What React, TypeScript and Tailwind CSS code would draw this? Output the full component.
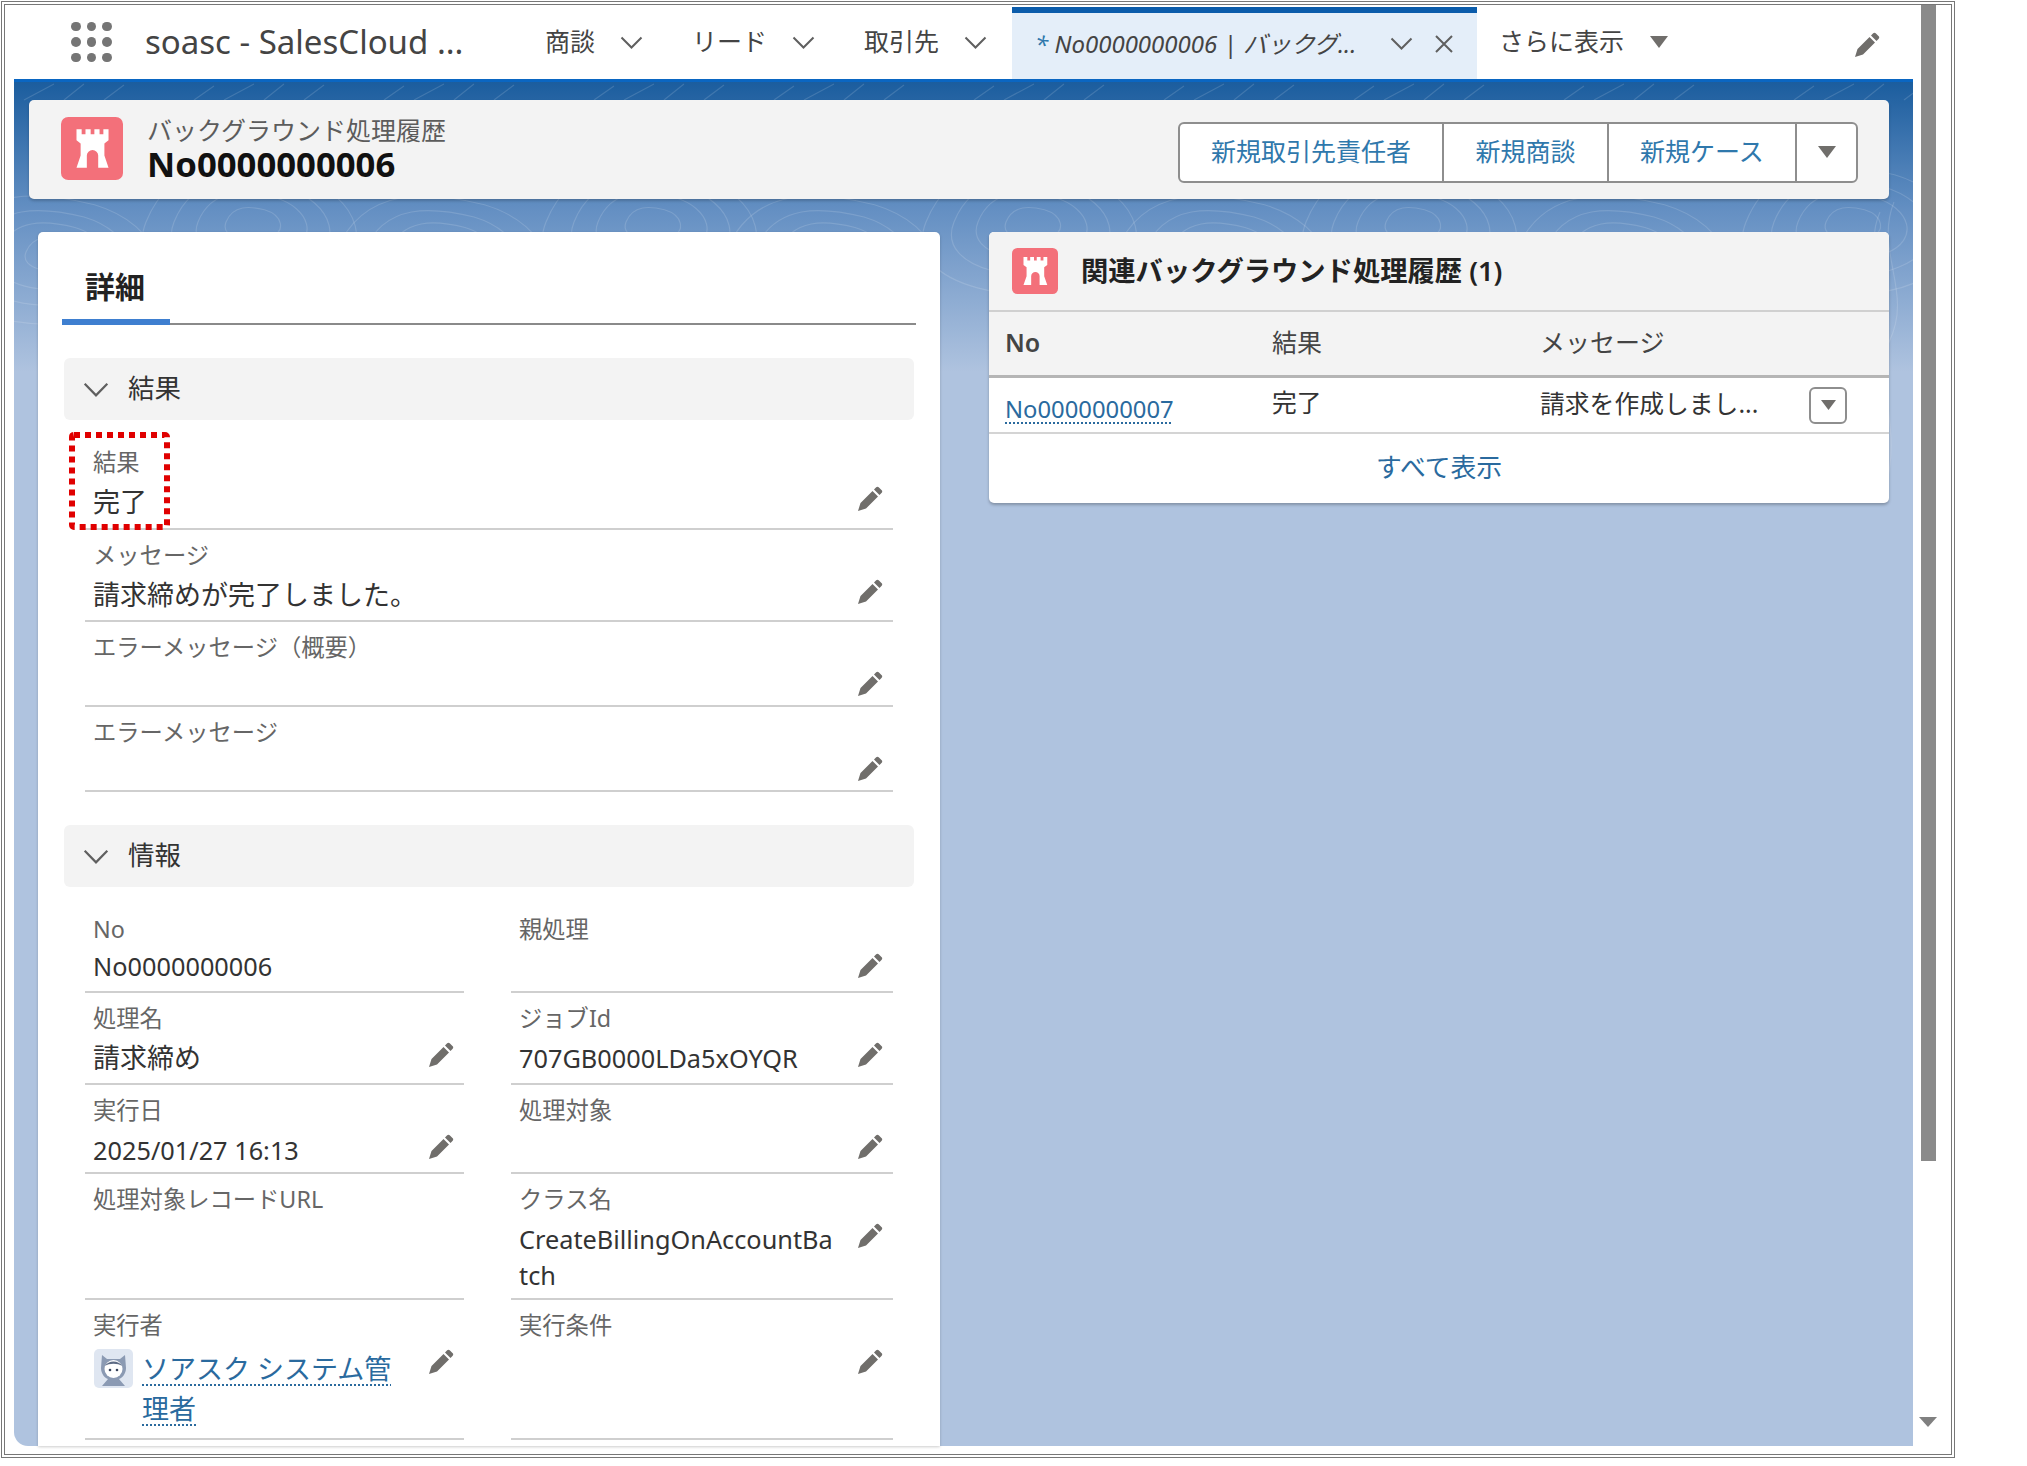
import type { ReactNode } from "react";

const Chevron = ({ w = 23, h = 13 }: { w?: number; h?: number }) => (
  <svg width={w} height={h} viewBox="0 0 23 13" preserveAspectRatio="none" className="shrink-0">
    <path d="M1.5 1.5L11.5 11.5L21.5 1.5" fill="none" stroke="#5f5f5f" strokeWidth="2" />
  </svg>
);

const Caret = () => (
  <svg width="20" height="12" viewBox="0 0 20 12" className="shrink-0">
    <path d="M1 0H19L10 12Z" fill="#706e6b" />
  </svg>
);

const Pencil = () => (
  <svg width="26" height="26" viewBox="0 0 26 26" className="shrink-0">
    <path d="M1 25L3.5 17L15.5 5L21 10.5L9 22.5Z M17 3.5L19.2 1.3C20 .6 21 .6 21.7 1.3L24.7 4.3C25.4 5 25.4 6 24.7 6.8L22.5 9Z" fill="#706e6b" />
  </svg>
);

const CastleIcon = ({ w, h }: { w: number; h: number }) => (
  <svg width={w} height={h} viewBox="0 0 60 62" preserveAspectRatio="none" className="shrink-0">
    <rect width="60" height="62" rx="7" fill="#f3707a" />
    <path
      d="M15 12h5v5h3.7v-5h5v5h3.6v-5h5v5h3.7v-5h5v11l-4 3v12l4 12H36V38a5.5 5.5 0 0 0-11 0v12H15l4-12V26l-4-3z"
      fill="#fff"
    />
  </svg>
);

const Avatar = () => (
  <svg width="39" height="39" viewBox="0 0 39 39" className="shrink-0">
    <rect width="39" height="39" rx="5" fill="#dfe6f1" />
    <path d="M8 6L13 10H26L31 6L32 19C32 25 28 29 25 30L31 37H8L14 30C11 29 7 25 7 19Z" fill="#8b9ab3" />
    <circle cx="19.5" cy="20" r="9" fill="#fff" />
    <path d="M11 17C14 11 25 11 28 17C24 14 15 14 11 17Z" fill="#5d6b85" />
    <circle cx="16" cy="21" r="1.3" fill="#36425a" />
    <circle cx="23" cy="21" r="1.3" fill="#36425a" />
  </svg>
);

const Contours = () => (
  <svg className="pointer-events-none absolute inset-x-0 top-0" width="1899" height="420" viewBox="0 0 1899 420">
    <g fill="none" stroke="#fff" strokeOpacity="0.14" strokeWidth="1.2">
      {[40, 240, 430, 640, 820, 1020, 1210, 1400, 1610, 1840].map((x, i) => {
        const y = i % 2 ? 140 : 170;
        return (
          <g key={x}>
            {[0.35, 0.7, 1, 1.35].map((s) => (
              <path
                key={s}
                d={`M${x - 80 * s} ${y}C${x - 60 * s} ${y - 50 * s} ${x - 10 * s} ${y - 45 * s} ${x + 30 * s} ${y - 35 * s}C${x + 80 * s} ${y - 20 * s} ${x + 95 * s} ${y + 25 * s} ${x + 45 * s} ${y + 45 * s}C${x} ${y + 65 * s} ${x - 100 * s} ${y + 50 * s} ${x - 80 * s} ${y}Z`}
              />
            ))}
            <path d={`M${x - 40} 4L${x - 60} 18M${x} 2L${x - 30} 18M${x + 30} 2L${x + 10} 18M${x + 70} 3L${x + 50} 18`} />
          </g>
        );
      })}
      <path d="M1880 120C1860 170 1900 210 1875 260C1860 300 1890 350 1870 410" />
      <path d="M1866 130C1846 175 1886 215 1862 262C1848 300 1876 350 1856 410" />
    </g>
  </svg>
);

const NavItem = ({ label, className }: { label: string; className: string }) => (
  <div className={`flex h-full items-center gap-[25px] ${className}`}>
    <span className="text-[25px] text-[#444]">{label}</span>
    <Chevron />
  </div>
);

const Field = ({
  label,
  h,
  children,
  edit = true,
  valueClass = "pt-[8px]",
}: {
  label: string;
  h: string;
  children?: ReactNode;
  edit?: boolean;
  valueClass?: string;
}) => (
  <div className={`flex flex-col border-b-2 border-[#cfcfcf] pl-[8px] pr-[10px] pt-[11px] ${h}`}>
    <div className="h-[28px] text-[23.3px] leading-[28px] text-[#666]">{label}</div>
    <div className="flex justify-between">
      <div className={`text-[25.3px] leading-[36px] text-[#333] ${valueClass}`}>{children}</div>
      {edit && (
        <div className="pt-[10px]">
          <Pencil />
        </div>
      )}
    </div>
  </div>
);

const SectionHeader = ({ label, className }: { label: string; className: string }) => (
  <div className={`flex h-[62px] items-center gap-[19px] rounded-[6px] bg-[#f3f3f3] pl-[19px] ${className}`}>
    <Chevron w={26} h={15} />
    <span className="text-[26.5px] text-[#333]">{label}</span>
  </div>
);

export default function App() {
  return (
    <div className="h-[1466px] w-[2027px] overflow-hidden bg-white pl-px pt-px font-['Noto_Sans','Noto_Sans_CJK_JP',sans-serif]">
      <div className="flex h-[1457px] w-[1954px] border-[4px] border-double border-[#777] pb-[8px] pl-[9px]">
        <div className="flex w-[1899px] shrink-0 flex-col">
          {/* nav bar */}
          <div className="flex h-[74px] shrink-0 items-center pl-[57px]">
            <div className="grid w-[41px] shrink-0 grid-cols-3 gap-x-[6px] gap-y-[6px]">
              {Array.from({ length: 9 }).map((_, i) => (
                <span key={i} className="h-[9.5px] w-[9.5px] rounded-full bg-[#757575]" />
              ))}
            </div>
            <div className="ml-[33px] w-[400px] shrink-0 text-[33px] text-[#444]">soasc - SalesCloud ...</div>
            <NavItem label="商談" className="w-[147px] shrink-0" />
            <NavItem label="リード" className="w-[172px] shrink-0" />
            <NavItem label="取引先" className="w-[148px] shrink-0" />
            <div className="mt-[2px] flex h-[72px] w-[465px] shrink-0 items-center border-t-[6px] border-[#0b5cab] bg-[#e4eef9] pb-[5px] pl-[23px]">
              <span className="w-[355px] shrink-0 whitespace-nowrap text-[24px] italic text-[#444]">
                <span className="text-[#2f78ac]">*</span> No0000000006 | バックグ...
              </span>
              <Chevron />
              <svg width="20" height="18" viewBox="0 0 20 18" className="ml-[21px] shrink-0">
                <path d="M2 1L18 17M18 1L2 17" fill="none" stroke="#5f5f5f" strokeWidth="2" />
              </svg>
            </div>
            <div className="ml-[22px] flex shrink-0 items-center gap-[25px]">
              <span className="text-[25px] text-[#444]">さらに表示</span>
              <Caret />
            </div>
            <div className="ml-auto mr-[33px] mt-[5px]">
              <Pencil />
            </div>
          </div>

          {/* page body */}
          <div className="relative flex min-h-0 flex-1 flex-col rounded-bl-[14px] border-t-[3px] border-[#0a66c2] bg-[linear-gradient(#1b5d9e_0px,#6590c3_130px,#afc3df_290px)] pl-[15px] pr-[24px] pt-[18px]">
            <Contours />

            {/* highlights */}
            <div className="relative flex h-[99px] shrink-0 items-center rounded-[5px] bg-[#f3f3f3] pl-[32px] pr-[31px] shadow-[0_2px_3px_rgba(0,0,0,0.2)]">
              <div className="mb-[3px]">
                <CastleIcon w={62} h={63} />
              </div>
              <div className="mb-[5px] ml-[24px] flex flex-col">
                <span className="text-[25px] leading-[33px] text-[#5c5c5c]">バックグラウンド処理履歴</span>
                <span className="text-[34.7px] font-bold leading-[33px] text-[#111]">No0000000006</span>
              </div>
              <div className="ml-auto mt-[5px] flex h-[61px] items-stretch rounded-[6px] border-2 border-[#8e8e8e] bg-white text-[25px] text-[#2f78ac]">
                <div className="flex w-[262px] items-center justify-center">新規取引先責任者</div>
                <div className="flex w-[165px] items-center justify-center border-l-2 border-[#8e8e8e]">新規商談</div>
                <div className="flex w-[188px] items-center justify-center border-l-2 border-[#8e8e8e]">新規ケース</div>
                <div className="flex w-[61px] items-center justify-center border-l-2 border-[#8e8e8e]">
                  <Caret />
                </div>
              </div>
            </div>

            <div className="relative mt-[33px] flex min-h-0 flex-1 items-start gap-[49px] pl-[9px]">
              {/* detail card */}
              <div className="h-full w-[902px] shrink-0 overflow-hidden rounded-t-[5px] bg-white shadow-[0_1px_3px_rgba(0,0,0,0.2)]">
                <div className="mx-[24px] flex h-[93px] items-end border-b-2 border-[#8a8a8a]">
                  <div className="-mb-[2px] flex h-[68px] w-[108px] items-center justify-center border-b-[6px] border-[#3e7fd0] pb-[4px] pr-[2px] text-[30px] font-bold text-[#222]">
                    詳細
                  </div>
                </div>

                <div className="px-[26px] pt-[33px]">
                  <SectionHeader label="結果" className="" />
                  <div className="mx-[21px] mt-[17px] flex flex-col">
                    <div className="relative">
                      <Field label="結果" h="h-[93px]">
                        <span className="text-[27px]">完了</span>
                      </Field>
                      <svg width="101" height="98" viewBox="0 0 101 98" className="absolute left-[-16px] top-[-5px]">
                        <rect x="3" y="3" width="95" height="92" rx="2" fill="none" stroke="#e00000" strokeWidth="6" strokeDasharray="6 5" />
                      </svg>
                    </div>
                    <Field label="メッセージ" h="h-[92px]">
                      <span className="text-[27px]">請求締めが完了しました。</span>
                    </Field>
                    <Field label="エラーメッセージ（概要）" h="h-[85px]" />
                    <Field label="エラーメッセージ" h="h-[85px]" />
                  </div>

                  <SectionHeader label="情報" className="mt-[33px]" />
                  <div className="mx-[21px] mt-[17px] grid grid-cols-[379px_382px] gap-x-[47px]">
                    <Field label="No" h="h-[89px]" edit={false} valueClass="pt-[5px]">No0000000006</Field>
                    <Field label="親処理" h="h-[89px]" />
                    <Field label="処理名" h="h-[92px]">
                      <span className="text-[27px]">請求締め</span>
                    </Field>
                    <Field label="ジョブId" h="h-[92px]">707GB0000LDa5xOYQR</Field>
                    <Field label="実行日" h="h-[89px]">2025/01/27 16:13</Field>
                    <Field label="処理対象" h="h-[89px]" />
                    <Field label="処理対象レコードURL" h="h-[126px]" edit={false} />
                    <Field label="クラス名" h="h-[126px]">
                      CreateBillingOnAccountBa
                      <br />
                      tch
                    </Field>
                    <Field label="実行者" h="h-[140px]">
                      <div className="flex gap-[9px] pl-px pt-[2px]">
                        <Avatar />
                        <a className="text-[27px] leading-[40px] text-[#2a6a9e] underline decoration-dotted decoration-2 underline-offset-[5px]">
                          ソアスク システム管
                          <br />
                          理者
                        </a>
                      </div>
                    </Field>
                    <Field label="実行条件" h="h-[140px]" />
                  </div>
                </div>
              </div>

              {/* related list */}
              <div className="w-[900px] shrink-0 overflow-hidden rounded-[5px] bg-white shadow-[0_2px_3px_rgba(0,0,0,0.25)]">
                <div className="flex h-[80px] items-center gap-[23px] border-b-2 border-[#d0d0d0] bg-[#f3f3f3] pl-[23px]">
                  <CastleIcon w={46} h={46} />
                  <span className="text-[27.3px] font-semibold text-[#222]">関連バックグラウンド処理履歴 (1)</span>
                </div>
                <div className="grid h-[66px] grid-cols-[267px_268px_1fr] items-center border-b-[3px] border-[#b5b5b5] bg-[#f3f3f3] pb-[2px] pl-[16px] text-[25px] text-[#444]">
                  <span className="font-semibold">No</span>
                  <span>結果</span>
                  <span>メッセージ</span>
                </div>
                <div className="grid h-[56px] grid-cols-[267px_268px_1fr] items-center border-b-2 border-[#d4d4d4] pl-[16px] text-[24.8px] text-[#333]">
                  <a className="pt-[9px] text-[23.8px] text-[#2a6a9e] underline decoration-dotted decoration-2 underline-offset-[5px]">
                    No0000000007
                  </a>
                  <span className="pb-[4px]">完了</span>
                  <div className="flex items-center justify-between pr-[42px]">
                    <span className="whitespace-nowrap pb-[2px]">請求を作成しまし...</span>
                    <div className="flex h-[37px] w-[38px] items-center justify-center rounded-[6px] border-2 border-[#8e8e8e]">
                      <svg width="15" height="10" viewBox="0 0 15 10">
                        <path d="M0 0H15L7.5 10Z" fill="#706e6b" />
                      </svg>
                    </div>
                  </div>
                </div>
                <div className="flex h-[69px] items-center justify-center pb-[2px] text-[25.8px] text-[#2a6a9e]">すべて表示</div>
              </div>
            </div>
          </div>
        </div>

        {/* scrollbar */}
        <div className="flex w-[29px] shrink-0 flex-col items-center pl-[1px]">
          <div className="h-[1156px] w-[15px] bg-[#8a8a8a]" />
          <div className="mb-[19px] mt-auto">
            <svg width="18" height="10" viewBox="0 0 18 10">
              <path d="M0 0H18L9 10Z" fill="#808080" />
            </svg>
          </div>
        </div>
      </div>
    </div>
  );
}
